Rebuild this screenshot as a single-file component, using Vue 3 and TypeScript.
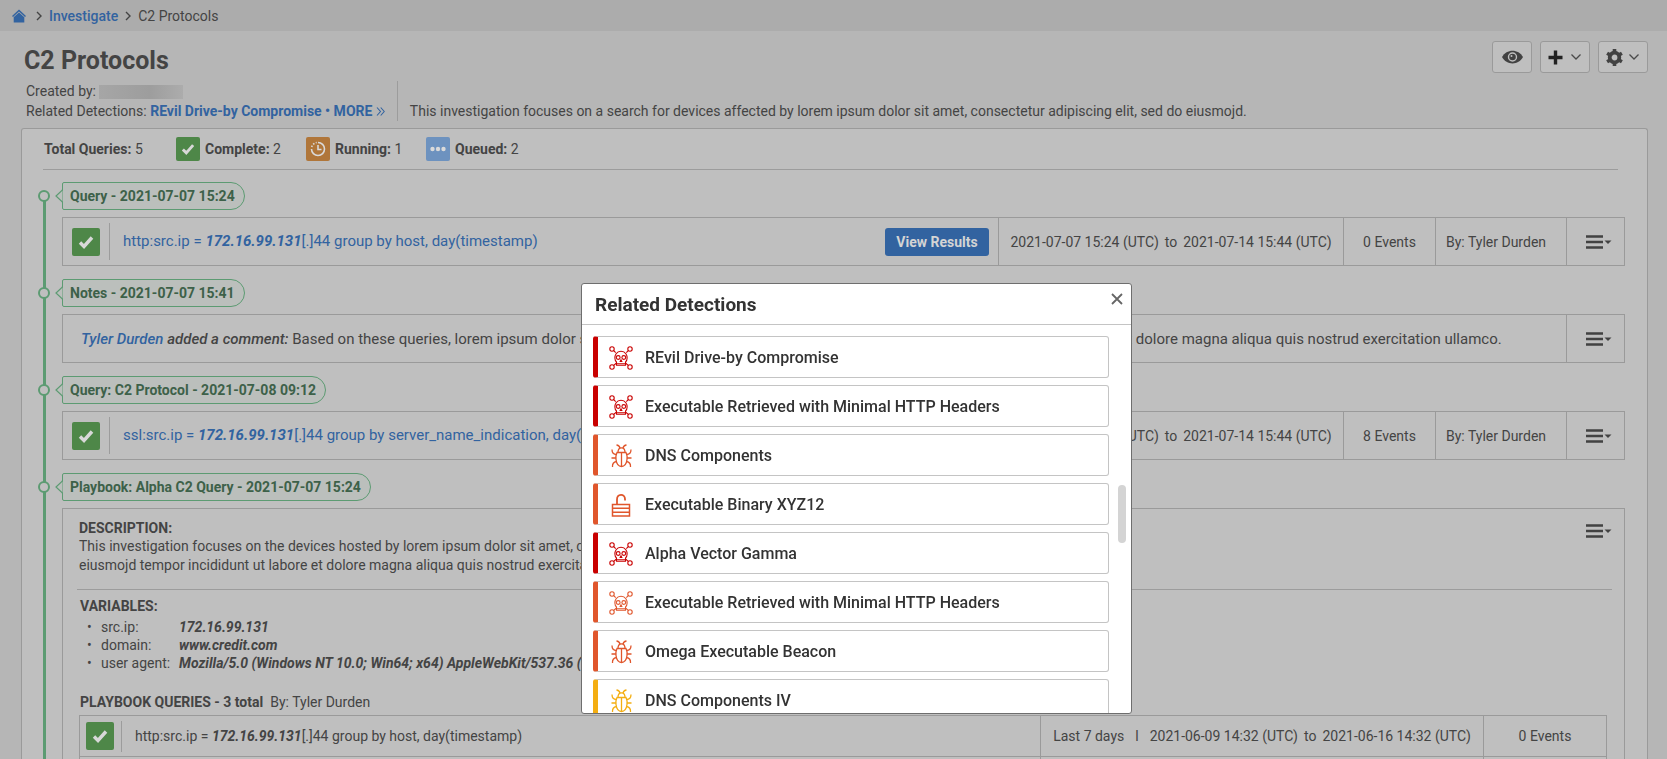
<script setup lang="ts">
type Severity = 'critical' | 'high' | 'medium'
type Glyph = 'skull' | 'bug' | 'lock'

interface Detection {
  name: string
  severity: Severity
  glyph: Glyph
}

const detections: Detection[] = [
  { name: 'REvil Drive-by Compromise', severity: 'critical', glyph: 'skull' },
  { name: 'Executable Retrieved with Minimal HTTP Headers', severity: 'critical', glyph: 'skull' },
  { name: 'DNS Components', severity: 'high', glyph: 'bug' },
  { name: 'Executable Binary XYZ12', severity: 'high', glyph: 'lock' },
  { name: 'Alpha Vector Gamma', severity: 'critical', glyph: 'skull' },
  { name: 'Executable Retrieved with Minimal HTTP Headers', severity: 'high', glyph: 'skull' },
  { name: 'Omega Executable Beacon', severity: 'high', glyph: 'bug' },
  { name: 'DNS Components IV', severity: 'medium', glyph: 'bug' },
]

interface Entry {
  tag: string
  kind: 'query' | 'note'
  prefix?: string
  suffix?: string
  results?: boolean
  events?: string
}

const entries: Entry[] = [
  {
    tag: 'Query - 2021-07-07 15:24',
    kind: 'query',
    prefix: 'http:src.ip = ',
    suffix: '[.]44 group by host, day(timestamp)',
    results: true,
    events: '0 Events',
  },
  { tag: 'Notes - 2021-07-07 15:41', kind: 'note' },
  {
    tag: 'Query: C2 Protocol - 2021-07-08 09:12',
    kind: 'query',
    prefix: 'ssl:src.ip = ',
    suffix: '[.]44 group by server_name_indication, day(timestamp)',
    events: '8 Events',
  },
]

const variables = [
  { key: 'src.ip:', value: '172.16.99.131' },
  { key: 'domain:', value: 'www.credit.com' },
  { key: 'user agent:', value: 'Mozilla/5.0 (Windows NT 10.0; Win64; x64) AppleWebKit/537.36 (KHTML, like Gecko)' },
]
</script>

<template>
  <div class="page">
    <svg class="defs" aria-hidden="true">
      <symbol id="check" viewBox="0 0 28 28">
        <path d="M8 14.500l4 4 8-9" fill="none" stroke="#d8d8d8" stroke-width="3.400" />
      </symbol>
      <symbol id="menu" viewBox="0 0 26 14">
        <path d="M0 1.500h17M0 7h17M0 12.500h17" stroke="#424242" stroke-width="2.300" />
        <path d="M18.500 5.500h7l-3.500 3.500z" fill="#424242" />
      </symbol>
      <symbol id="down" viewBox="0 0 12 8">
        <path d="M1.500 1.500l4.500 4.500 4.500-4.500" fill="none" stroke="#4a4a4a" stroke-width="1.300" />
      </symbol>
      <symbol id="skull" viewBox="0 0 24 24">
        <g fill="none" stroke="currentColor" stroke-width="1.100">
          <circle cx="3" cy="3" r="2.200" /><circle cx="21" cy="3" r="2.200" />
          <circle cx="3" cy="21" r="2.200" /><circle cx="21" cy="21" r="2.200" />
          <path d="M4.700 4.700l2 2M19.300 4.700l-2 2M4.700 19.300l2.800-2.300M19.300 19.300l-2.800-2.300" />
          <path d="M7.500 16c-2.200-1.600-2-6-.4-8.300 2.300-3.300 7.500-3.300 9.800 0 1.600 2.300 1.800 6.700-.4 8.300v3.200h-9z" />
          <circle cx="9.200" cy="11.500" r="1.900" /><circle cx="14.800" cy="11.500" r="1.900" />
          <path d="M12 13.800l-.8 1.700h1.600zM8 17.700h8" />
        </g>
      </symbol>
      <symbol id="bug" viewBox="0 0 24 24">
        <g fill="none" stroke="currentColor" stroke-width="1.300">
          <path d="M8 8.500c-1 2-1.300 4.500-1 7 .5 4 2.700 7 5.500 7s5-3 5.500-7c.3-2.500 0-5-1-7zM12.500 8.500v14" />
          <path d="M9 8.300c0-2.500 1.300-4.500 3.500-4.500s3.500 2 3.500 4.500M11 4c-.5-1.700-1.500-2.800-3.500-3M14 4c.5-1.700 1.500-2.800 3.500-3" />
          <path d="M7.500 10.500c-3.500 0-4.500-1.500-4.500-5M7 14h-4.500M7.500 17.500c-3 .5-4.300 2-4 5.500M17.500 10.500c3.500 0 4.500-1.500 4.500-5M18 14h4.500M17.500 17.500c3 .5 4.300 2 4 5.500" />
        </g>
      </symbol>
      <symbol id="lock" viewBox="0 0 24 24">
        <g fill="none" stroke="currentColor" stroke-width="1.500">
          <path d="M3.500 11.500h17v11.500h-17zM3.500 15.300h17M3.500 19.200h17" />
          <path d="M8 11.500v-5c0-6 8-6 8-.5v1.500" stroke-width="1.800" />
        </g>
      </symbol>
    </svg>

    <nav class="crumbs" aria-label="Breadcrumb">
      <a href="#" class="home" aria-label="Home">
        <svg width="14" height="14" viewBox="0 0 14 14">
          <path d="M7 0.500L14 7l-1 1-6-5.500L1 8 0 7z" fill="#3263a0" />
          <path d="M7 3.500l5.300 4.800v5.200h-10.600v-5.200z" fill="#3263a0" />
        </svg>
      </a>
      <svg class="sep" width="6" height="10" viewBox="0 0 6 10"><path d="M1 1l4 4-4 4" fill="none" stroke="#444" stroke-width="1.400" /></svg>
      <a href="#" class="crumb-link">Investigate</a>
      <svg class="sep" width="6" height="10" viewBox="0 0 6 10"><path d="M1 1l4 4-4 4" fill="none" stroke="#444" stroke-width="1.400" /></svg>
      <span>C2 Protocols</span>
    </nav>

    <header class="head">
      <div class="head-top">
        <h1>C2 Protocols</h1>
        <div class="tools">
          <button type="button" class="tool" aria-label="Watch">
            <svg width="21" height="14" viewBox="0 0 21 14">
              <path d="M0 7C4.500-1.500 16.500-1.500 21 7 16.500 15.500 4.500 15.500 0 7z" fill="#424242" />
              <circle cx="10.500" cy="7" r="4" fill="none" stroke="#bfbfbf" stroke-width="1.400" />
              <circle cx="9.500" cy="6" r="1" fill="#bfbfbf" />
            </svg>
          </button>
          <button type="button" class="tool wide" aria-label="Add">
            <svg width="15" height="15" viewBox="0 0 15 15"><path d="M7.500 0.500v14M0.500 7.500h14" stroke="#222" stroke-width="3.400" /></svg>
            <svg width="12" height="8"><use href="#down" /></svg>
          </button>
          <button type="button" class="tool wide" aria-label="Settings">
            <svg width="17" height="17" viewBox="0 0 17 17">
              <circle cx="8.500" cy="8.500" r="4.800" fill="none" stroke="#424242" stroke-width="3.800" />
              <path d="M8.500 0v3.500M8.500 13.500v3.500M1.100 4.250l3 1.750M12.900 11l3 1.750M1.100 12.750l3-1.750M12.900 6l3-1.750" stroke="#424242" stroke-width="3.600" />
            </svg>
            <svg width="12" height="8"><use href="#down" /></svg>
          </button>
        </div>
      </div>
      <div class="meta">
        <div class="meta-left">
          <p>Created by: <span class="redacted"></span></p>
          <p>Related Detections: <a href="#">REvil Drive-by Compromise • MORE
            <svg width="9" height="9" viewBox="0 0 9 9"><path d="M1 .5l3.500 4-3.500 4M4.700 .5l3.500 4-3.500 4" fill="none" stroke="#3263a0" stroke-width="1.100" /></svg></a></p>
        </div>
        <p class="summary">This investigation focuses on a search for devices affected by lorem ipsum dolor sit amet, consectetur adipiscing elit, sed do eiusmojd.</p>
      </div>
    </header>

    <main class="panel">
      <div class="stats">
        <span class="total"><b>Total Queries:</b> 5</span>
        <span class="stat s-complete">
          <svg class="badge green" width="24" height="24"><use href="#check" /></svg><span><b>Complete:</b> 2</span>
        </span>
        <span class="stat s-running">
          <svg class="badge orange" width="24" height="24" viewBox="0 0 24 24">
            <path d="M12 5.500a6.500 6.500 0 1 1-6.500 6.500" fill="none" stroke="#dadada" stroke-width="1.600" />
            <path d="M5.700 10a6.500 6.500 0 0 1 5-4.500" fill="none" stroke="#dadada" stroke-width="1.600" stroke-dasharray="1.500 1.500" />
            <path d="M12 8v4.500h3.500" fill="none" stroke="#dadada" stroke-width="1.600" />
          </svg><span><b>Running:</b> 1</span>
        </span>
        <span class="stat">
          <svg class="badge blue" width="24" height="24" viewBox="0 0 24 24">
            <circle cx="6.500" cy="12" r="2.200" fill="#dadada" /><circle cx="12" cy="12" r="2.200" fill="#dadada" /><circle cx="17.500" cy="12" r="2.200" fill="#dadada" />
          </svg><span><b>Queued:</b> 2</span>
        </span>
      </div>

      <div class="timeline">
        <section v-for="e in entries" :key="e.tag" class="entry">
          <h2 class="tag">
            <svg class="notch" width="8" height="14" viewBox="0 0 8 14"><path d="M7.500 0v1L1 7l6.500 6v1" fill="#bbbfbc" stroke="#5c9b72" stroke-width="1.200" /></svg>
            {{ e.tag }}
          </h2>
          <div v-if="e.kind === 'query'" class="card">
            <svg class="done green" width="28" height="28"><use href="#check" /></svg>
            <a href="#" class="query">{{ e.prefix }}<b><i>172.16.99.131</i></b>{{ e.suffix }}</a>
            <button v-if="e.results" type="button" class="view">View Results</button>
            <span class="cell dates"><span>2021-07-07 15:24 (UTC)</span><span>to</span><span>2021-07-14 15:44 (UTC)</span></span>
            <span class="cell events">{{ e.events }}</span>
            <span class="cell author">By: Tyler Durden</span>
            <button type="button" class="cell menu" aria-label="Actions"><svg width="26" height="14"><use href="#menu" /></svg></button>
          </div>
          <div v-else class="card">
            <p class="note"><a href="#"><i>Tyler Durden</i></a> <strong><i>added a comment:</i></strong> Based on these queries, lorem ipsum dolor sit amet, consectetur adipiscing elit, sed do eiusmojd tempor incididunt ut labore et dolore magna aliqua quis nostrud exercitation ullamco.</p>
            <button type="button" class="cell menu" aria-label="Actions"><svg width="26" height="14"><use href="#menu" /></svg></button>
          </div>
        </section>

        <section class="entry">
          <h2 class="tag">
            <svg class="notch" width="8" height="14" viewBox="0 0 8 14"><path d="M7.500 0v1L1 7l6.500 6v1" fill="#bbbfbc" stroke="#5c9b72" stroke-width="1.200" /></svg>
            Playbook: Alpha C2 Query - 2021-07-07 15:24
          </h2>
          <div class="playbook">
            <div class="description">
              <div class="description-text">
                <h3>DESCRIPTION:</h3>
                <p>This investigation focuses on the devices hosted by lorem ipsum dolor sit amet, consectetur adipiscing elit, sed do<br>eiusmojd tempor incididunt ut labore et dolore magna aliqua quis nostrud exercitation ullamco.</p>
              </div>
              <button type="button" class="menu" aria-label="Actions"><svg width="26" height="14"><use href="#menu" /></svg></button>
            </div>
            <h3 class="variables-title">VARIABLES:</h3>
            <ul>
              <li v-for="v in variables" :key="v.key"><span class="key">{{ v.key }}</span><b><i>{{ v.value }}</i></b></li>
            </ul>
            <p class="queries-title"><b>PLAYBOOK QUERIES - 3 total</b><span>By: Tyler Durden</span></p>
            <table>
              <tbody>
                <tr>
                  <td>
                    <div class="pq"><svg class="done green" width="28" height="28"><use href="#check" /></svg>
                      <span class="pq-text">http:src.ip = <b><i>172.16.99.131</i></b>[.]44 group by host, day(timestamp)</span></div>
                  </td>
                  <td class="pq-range"><div class="range"><span>Last 7 days</span><span>l</span><span class="dates-in"><span>2021-06-09 14:32 (UTC)</span><span>to</span><span>2021-06-16 14:32 (UTC)</span></span></div></td>
                  <td class="pq-events">0 Events</td>
                </tr>
                <tr><td></td><td></td><td></td></tr>
              </tbody>
            </table>
          </div>
        </section>
      </div>
    </main>

    <div class="overlay">
      <div class="modal" role="dialog" aria-modal="true" aria-labelledby="modal-title">
        <div class="modal-head">
          <h2 id="modal-title">Related Detections</h2>
          <button type="button" class="close" aria-label="Close">
            <svg width="12" height="12" viewBox="0 0 12 12"><path d="M1 1l10 10M11 1L1 11" stroke="#666" stroke-width="1.800" /></svg>
          </button>
        </div>
        <ul class="list">
          <li v-for="(d, i) in detections" :key="i">
            <a href="#" :class="['item', d.severity]">
              <svg width="24" height="24"><use :href="'#' + d.glyph" /></svg>
              <span>{{ d.name }}</span>
            </a>
          </li>
        </ul>
        <div class="thumb"></div>
      </div>
    </div>
  </div>
</template>

<style>
body {
  margin: 0;
  background: #b6b6b6;
}
</style>

<style scoped>
* { box-sizing: border-box; }
h1, h2, h3, p, ul { margin: 0; padding: 0; }
ul { list-style: none; }
a { color: #3263a0; text-decoration: none; }
button { font: inherit; padding: 0; cursor: pointer; }
svg { display: block; flex: none; }
b, h3 { font-weight: 700; }

.defs { position: absolute; width: 0; height: 0; }

.page {
  height: 100vh;
  overflow: hidden;
  display: flex;
  flex-direction: column;
  font: 14px/20px Roboto, "Liberation Sans", sans-serif;
  color: #444;
}

.crumbs {
  display: flex;
  align-items: center;
  gap: 7px;
  height: 31px;
  flex: none;
  padding: 0 12px;
  background: #acacac;
}
.home { margin-right: 3px; }
.crumb-link { font-weight: 500; }

.head { padding: 10px 19px 0 24px; flex: none; }
.head-top { display: flex; justify-content: space-between; }
h1 { font-size: 25px; line-height: 40px; font-weight: 700; }
.tools { display: flex; gap: 8px; }
.tool {
  display: flex;
  align-items: center;
  justify-content: center;
  width: 40px;
  height: 32px;
  border: 1px solid #9a9a9a;
  border-radius: 3px;
  background: #bfbfbf;
}
.wide {
  width: 50px;
  justify-content: space-between;
  padding: 0 7px;
}
.meta { display: flex; padding: 0 0 7px 2px; }
.meta-left {
  padding-right: 12px;
  border-right: 1px solid #9c9c9c;
}
.meta p { line-height: 20px; }
.meta a { font-weight: 700; }
.meta a svg { display: inline-block; }
.redacted {
  display: inline-block;
  width: 84px;
  height: 14px;
  vertical-align: middle;
  background: linear-gradient(90deg, #a6a6a6, #9d9d9d 60%, #acacac);
}
.summary { align-self: flex-end; padding-left: 12px; }

.panel {
  flex: 1;
  margin: 0 19px 0 21px;
  padding: 0 22px 0 21px;
  border: 1px solid #9a9a9a;
  border-bottom: 0;
  border-radius: 3px 3px 0 0;
  background: #bfbfbf;
}
.stats {
  display: flex;
  align-items: center;
  height: 41px;
  margin-right: 7px;
  border-bottom: 1px solid #9c9c9c;
}
.total { width: 133px; padding-left: 1px; }
.stat { display: flex; align-items: center; gap: 5px; }
.s-complete { width: 130px; }
.s-running { width: 120px; }
.badge, .done { border-radius: 2px; }
.green { background: #4e8748; }
.orange { background: #b0763a; }
.blue { background: #6d92bf; }

.timeline {
  position: relative;
  padding: 12px 0 0 19px;
}
.timeline::before {
  content: "";
  position: absolute;
  left: 0;
  top: 25px;
  width: 3px;
  height: 100vh;
  background: #5c9b72;
}
.entry { margin-bottom: 13px; }
.tag {
  position: relative;
  display: table;
  height: 28px;
  margin-bottom: 7px;
  padding: 0 9px 0 7px;
  border: 1px solid #5c9b72;
  border-radius: 2px 14px 14px 2px;
  background: #bbbfbc;
  font-size: 14px;
  line-height: 26px;
  font-weight: 700;
  color: #3d6149;
}
.tag::before {
  content: "";
  position: absolute;
  left: -25px;
  top: 7px;
  width: 8px;
  height: 8px;
  border: 2px solid #5c9b72;
  border-radius: 50%;
  background: #bfbfbf;
}
.notch { position: absolute; left: -8px; top: 6px; }

.card {
  display: flex;
  align-items: center;
  height: 49px;
  border: 1px solid #9a9a9a;
}
.done { margin-left: 9px; }
.query {
  flex: 1;
  margin-left: 9px;
  padding-left: 13px;
  border-left: 1px solid #9c9c9c;
  font-size: 15px;
  line-height: 37px;
  white-space: nowrap;
}
.view {
  width: 104px;
  height: 28px;
  margin-right: 9px;
  border: 0;
  border-radius: 3px;
  background: #3263a0;
  color: #d4d4d4;
  font-weight: 700;
}
.cell {
  display: flex;
  align-items: center;
  justify-content: center;
  align-self: stretch;
  border: 0;
  border-left: 1px solid #9a9a9a;
}
.dates { width: 345px; gap: 6px; }
.dates-in { display: flex; gap: 6px; }
.events { width: 92px; }
.author { width: 131px; justify-content: flex-start; padding-left: 10px; }
.menu { background: none; }
.cell.menu { width: 58px; padding-left: 6px; }
.note { flex: 1; padding-left: 18px; font-size: 15px; white-space: nowrap; }
.note a, .note strong { font-weight: 500; }

.playbook {
  padding: 10px 12px 0 14px;
  border: 1px solid #9a9a9a;
  height: 300px;
}
.description {
  display: flex;
  justify-content: space-between;
  align-items: flex-start;
  height: 71px;
  border-bottom: 1px solid #9c9c9c;
}
.description-text { padding-left: 2px; }
h3 { font-size: 14px; line-height: 18px; }
.description p { line-height: 19px; }
.description .menu { border: 0; margin-top: 5px; }
.variables-title { padding: 7px 0 0 3px; }
ul li { line-height: 18px; }
.playbook ul { padding: 3px 0 0 10px; }
.playbook li { display: flex; }
.playbook li::before { content: "•"; width: 14px; }
.key { width: 78px; }
.queries-title { display: flex; gap: 7px; padding: 20px 0 3px 3px; }
table {
  width: calc(100% - 7px);
  margin-left: 2px;
  border-collapse: collapse;
}
td { height: 41px; padding: 0; border: 1px solid #9a9a9a; }
.pq { display: flex; align-items: center; }
.pq .done { margin-left: 6px; }
.pq-text { margin-left: 7px; padding-left: 13px; border-left: 1px solid #9c9c9c; line-height: 31px; }
.pq-range { width: 443px; }
.range { display: flex; justify-content: center; gap: 11px; }
.pq-events { width: 123px; text-align: center; }

.overlay {
  position: fixed;
  inset: 0;
  display: flex;
  justify-content: center;
  align-items: flex-start;
  padding: 283px 0 0 46px;
}
.modal {
  position: relative;
  display: flex;
  flex-direction: column;
  width: 551px;
  height: 431px;
  border: 1px solid #6e6e6e;
  border-radius: 3px;
  background: #fff;
  color: #333;
  overflow: hidden;
}
.modal-head {
  display: flex;
  justify-content: space-between;
  height: 41px;
  flex: none;
  padding: 0 8px 0 13px;
  border-bottom: 1px solid #c4c4c4;
}
.modal-head h2 { font-size: 19px; line-height: 42px; font-weight: 700; }
.close { height: 12px; margin-top: 9px; border: 0; background: none; }
.list {
  flex: 1;
  overflow: hidden;
  padding: 11px 22px 0 11px;
}
.item {
  display: flex;
  align-items: center;
  gap: 12px;
  height: 42px;
  margin-bottom: 7px;
  padding: 2px 0 0 11px;
  border: 1px solid #c4c4c4;
  border-left: 5px solid;
  border-radius: 3px;
  font-size: 16px;
  font-weight: 500;
}
.item span { color: #333; }
.critical { color: #c90000; border-left-color: #c90000; }
.high { color: #e0562c; border-left-color: #e0562c; }
.medium { color: #f4ae12; border-left-color: #f4ae12; }
.thumb {
  position: absolute;
  right: 5px;
  top: 201px;
  width: 8px;
  height: 58px;
  border-radius: 4px;
  background: #d4d4d4;
}
</style>
